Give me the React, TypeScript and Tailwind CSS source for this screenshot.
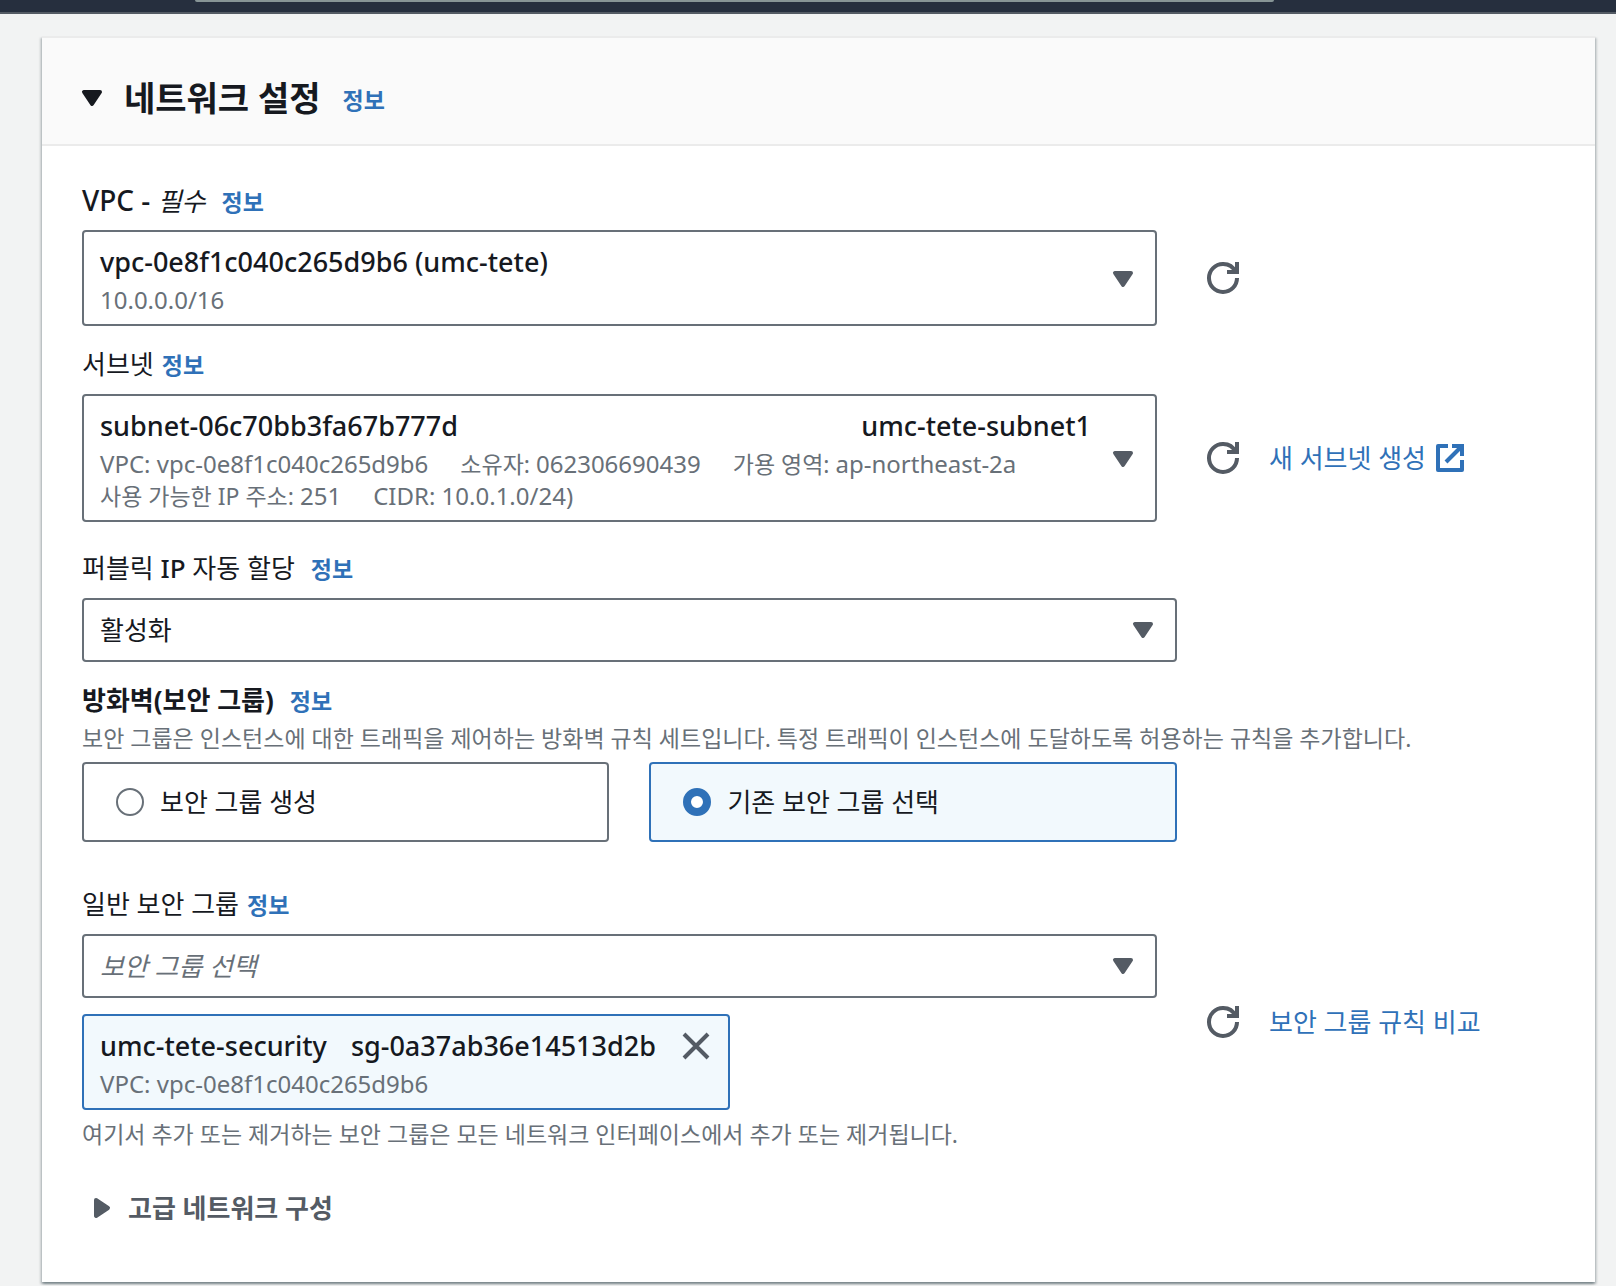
import React, { useState } from "react";

type IconProps = { className?: string };

const CaretIcon: React.FC<IconProps> = ({ className = "" }) => (
  <svg
    viewBox="0 0 16 16"
    className={`size-8 shrink-0 fill-current stroke-current stroke-2 ${className}`}
    strokeLinejoin="round"
    aria-hidden="true"
  >
    <path d="M4 5h8l-4 6z" />
  </svg>
);

const RefreshIcon: React.FC = () => (
  <svg viewBox="0 0 16 16" className="size-8 fill-none stroke-current stroke-2" aria-hidden="true">
    <path d="M10 5h5V0" />
    <path d="M15 8a6.957 6.957 0 0 1-7 7 6.957 6.957 0 0 1-7-7 6.957 6.957 0 0 1 7-7 6.87 6.87 0 0 1 6.3 4" />
  </svg>
);

const ExternalIcon: React.FC = () => (
  <svg
    viewBox="0 0 16 16"
    className="size-8 fill-none stroke-current stroke-2"
    strokeLinejoin="round"
    aria-hidden="true"
  >
    <path d="M9 2h5v5" strokeLinejoin="miter" />
    <path d="M6 10l8-8" />
    <path d="M14 9v5H2V2h5" />
  </svg>
);

const CloseIcon: React.FC = () => (
  <svg viewBox="0 0 16 16" className="size-8 fill-none stroke-current stroke-2" aria-hidden="true">
    <path d="M2 2l12 12M14 2L2 14" />
  </svg>
);

const InfoLink: React.FC<IconProps> = ({ className = "" }) => (
  <a href="#info" className={`text-[23px] font-bold text-[#2f71b8] ${className}`}>
    정보
  </a>
);

const RefreshButton: React.FC = () => (
  <button type="button" aria-label="새로 고침" className="cursor-pointer text-[#545b64]">
    <RefreshIcon />
  </button>
);

interface RichSelectProps {
  labelledBy: string;
  children: React.ReactNode;
}

const RichSelect: React.FC<RichSelectProps> = ({ labelledBy, children }) => (
  <button
    type="button"
    aria-haspopup="listbox"
    aria-labelledby={labelledBy}
    className="flex w-full cursor-pointer items-center gap-2 rounded-sm border-2 border-[#687078] bg-white pt-2.5 pr-4 pb-2 pl-4 text-left"
  >
    <span className="min-w-0 flex-1">{children}</span>
    <CaretIcon className="text-[#545b64]" />
  </button>
);

interface PlainSelectProps {
  id: string;
  options: string[];
  className?: string;
}

const PlainSelect: React.FC<PlainSelectProps> = ({ id, options, className = "" }) => (
  <div className="relative">
    <select
      id={id}
      className={`h-16 w-full appearance-none rounded-sm border-2 border-[#687078] bg-white px-4 text-[26px] ${className}`}
    >
      {options.map((option) => (
        <option key={option}>{option}</option>
      ))}
    </select>
    <CaretIcon className="pointer-events-none absolute top-4 right-[18px] text-[#545b64]" />
  </div>
);

interface RowProps {
  side: React.ReactNode;
  children: React.ReactNode;
}

const Row: React.FC<RowProps> = ({ side, children }) => (
  <div className="mt-3 flex items-center">
    <div className="min-w-0 flex-1">{children}</div>
    <div className="flex w-[398px] items-center gap-[30px] pl-[50px]">{side}</div>
  </div>
);

const subnetDetails = [
  { name: "VPC", value: "vpc-0e8f1c040c265d9b6", nameClass: "" },
  { name: "소유자", value: "062306690439", nameClass: "text-[23px]" },
  { name: "가용 영역", value: "ap-northeast-2a", nameClass: "text-[23px]" },
  { name: "사용 가능한 IP 주소", value: "251", nameClass: "text-[23px]" },
  { name: "CIDR", value: "10.0.1.0/24)", nameClass: "" },
];

const groupOptions = [
  { value: "create", label: "보안 그룹 생성" },
  { value: "existing", label: "기존 보안 그룹 선택" },
];

const App: React.FC = () => {
  const [groupMode, setGroupMode] = useState("existing");

  return (
    <div className="min-h-screen bg-[#f2f3f3] pb-1 font-['Noto_Sans','Noto_Sans_CJK_KR',sans-serif] text-[26px] leading-9 text-[#16191f]">
      <header className="h-3.5 border-b-2 border-[#545b64] bg-[#262f3e]">
        <div className="mr-[342px] ml-[195px] h-0.5 rounded-b-sm bg-[#879596]" />
      </header>

      <section className="mt-[22px] mr-[21px] ml-[42px] border-t-2 border-[#ebebeb] bg-white shadow-[0_2px_2px_0_rgba(0,28,36,0.3),2px_2px_2px_0_rgba(0,28,36,0.15),-2px_2px_2px_0_rgba(0,28,36,0.15)]">
        <div className="flex items-center gap-[22px] border-b-2 border-[#ebebeb] bg-[#fafafa] px-10 pt-10 pb-[26px]">
          <h2 className="text-[34px] leading-10 font-bold">
            <button type="button" aria-expanded="true" className="flex cursor-pointer items-center">
              <CaretIcon className="-ml-1.5" />
              <span className="ml-4">네트워크 설정</span>
            </button>
          </h2>
          <InfoLink className="pt-1" />
        </div>

        <div className="px-10 pt-9 pb-14">
          <div className="flex h-9 items-baseline gap-4">
            <span id="vpc-label">
              <span className="text-[28px] font-medium">VPC - </span>
              <em>필수</em>
            </span>
            <InfoLink />
          </div>
          <Row side={<RefreshButton />}>
            <RichSelect labelledBy="vpc-label">
              <span className="block text-[27px] leading-10 font-medium">vpc-0e8f1c040c265d9b6 (umc-tete)</span>
              <span className="mt-0.5 block text-2xl leading-8 text-[#687078]">10.0.0.0/16</span>
            </RichSelect>
          </Row>

          <div className="mt-5 flex h-9 items-baseline gap-2">
            <span id="subnet-label">서브넷</span>
            <InfoLink />
          </div>
          <Row
            side={
              <>
                <RefreshButton />
                <a href="#subnet" className="flex items-center gap-2 whitespace-nowrap text-[#2f71b8]">
                  새 서브넷 생성
                  <ExternalIcon />
                </a>
              </>
            }
          >
            <RichSelect labelledBy="subnet-label">
              <span className="flex justify-between pr-2 text-[27px] leading-10 font-medium">
                <span>subnet-06c70bb3fa67b777d</span>
                <span>umc-tete-subnet1</span>
              </span>
              <span className="mt-0.5 flex flex-wrap gap-x-8 text-2xl leading-8 text-[#687078]">
                {subnetDetails.map((detail) => (
                  <span key={detail.name} className="h-8">
                    <span className={detail.nameClass}>{detail.name}: </span>
                    {detail.value}
                  </span>
                ))}
              </span>
            </RichSelect>
          </Row>

          <div className="mt-7 flex h-9 items-baseline gap-4">
            <label htmlFor="public-ip">
              퍼블릭 <span className="font-medium">IP</span> 자동 할당
            </label>
            <InfoLink />
          </div>
          <div className="mt-3 grid grid-cols-4 gap-x-10">
            <div className="col-span-3">
              <PlainSelect id="public-ip" options={["활성화", "비활성화"]} />
            </div>
          </div>

          <div className="mt-5 flex h-9 items-baseline gap-4">
            <span id="firewall-label" className="font-bold">
              방화벽(보안 그룹)
            </span>
            <InfoLink />
          </div>
          <p className="mt-1 text-[23px] leading-8 text-[#687078]">
            보안 그룹은 인스턴스에 대한 트래픽을 제어하는 방화벽 규칙 세트입니다. 특정 트래픽이 인스턴스에 도달하도록 허용하는 규칙을 추가합니다.
          </p>
          <div className="mt-2 grid grid-cols-4 gap-x-10">
            <div
              role="radiogroup"
              aria-labelledby="firewall-label"
              className="col-span-3 grid grid-cols-2 gap-x-10"
            >
              {groupOptions.map((option) => (
                <label
                  key={option.value}
                  className="flex h-20 cursor-pointer items-center gap-4 rounded-sm border-2 border-[#687078] px-8 has-checked:border-[#2f71b8] has-checked:bg-[#f2f9fd]"
                >
                  <input
                    type="radio"
                    name="group-mode"
                    value={option.value}
                    checked={groupMode === option.value}
                    onChange={() => setGroupMode(option.value)}
                    className="size-7 appearance-none rounded-full border-2 border-[#687078] bg-white checked:border-8 checked:border-[#2f71b8]"
                  />
                  {option.label}
                </label>
              ))}
            </div>
          </div>

          <div className="mt-11 flex h-9 items-baseline gap-2">
            <label htmlFor="security-group">일반 보안 그룹</label>
            <InfoLink />
          </div>
          <Row
            side={
              <>
                <RefreshButton />
                <a href="#compare" className="whitespace-nowrap text-[#2f71b8]">
                  보안 그룹 규칙 비교
                </a>
              </>
            }
          >
            <PlainSelect id="security-group" options={["보안 그룹 선택"]} className="text-[#687078] italic" />
            <div className="mt-4 flex w-fit items-start gap-6 rounded-sm border-2 border-[#2f71b8] bg-[#f2f9fd] px-4 pt-2.5 pb-2">
              <div>
                <div className="flex gap-6 text-[27px] leading-10 font-medium">
                  <span>umc-tete-security</span>
                  <span>sg-0a37ab36e14513d2b</span>
                </div>
                <div className="mt-0.5 text-2xl leading-8 text-[#687078]">VPC: vpc-0e8f1c040c265d9b6</div>
              </div>
              <button type="button" aria-label="제거" className="mt-1 cursor-pointer text-[#545b64]">
                <CloseIcon />
              </button>
            </div>
          </Row>
          <p className="mt-2 text-[23px] leading-8 text-[#687078]">
            여기서 추가 또는 제거하는 보안 그룹은 모든 네트워크 인터페이스에서 추가 또는 제거됩니다.
          </p>

          <button
            type="button"
            aria-expanded="false"
            className="mt-10 ml-1 flex cursor-pointer items-center gap-2.5 font-bold text-[#545b64]"
          >
            <CaretIcon className="-rotate-90" />
            고급 네트워크 구성
          </button>
        </div>
      </section>
    </div>
  );
};

export default App;
